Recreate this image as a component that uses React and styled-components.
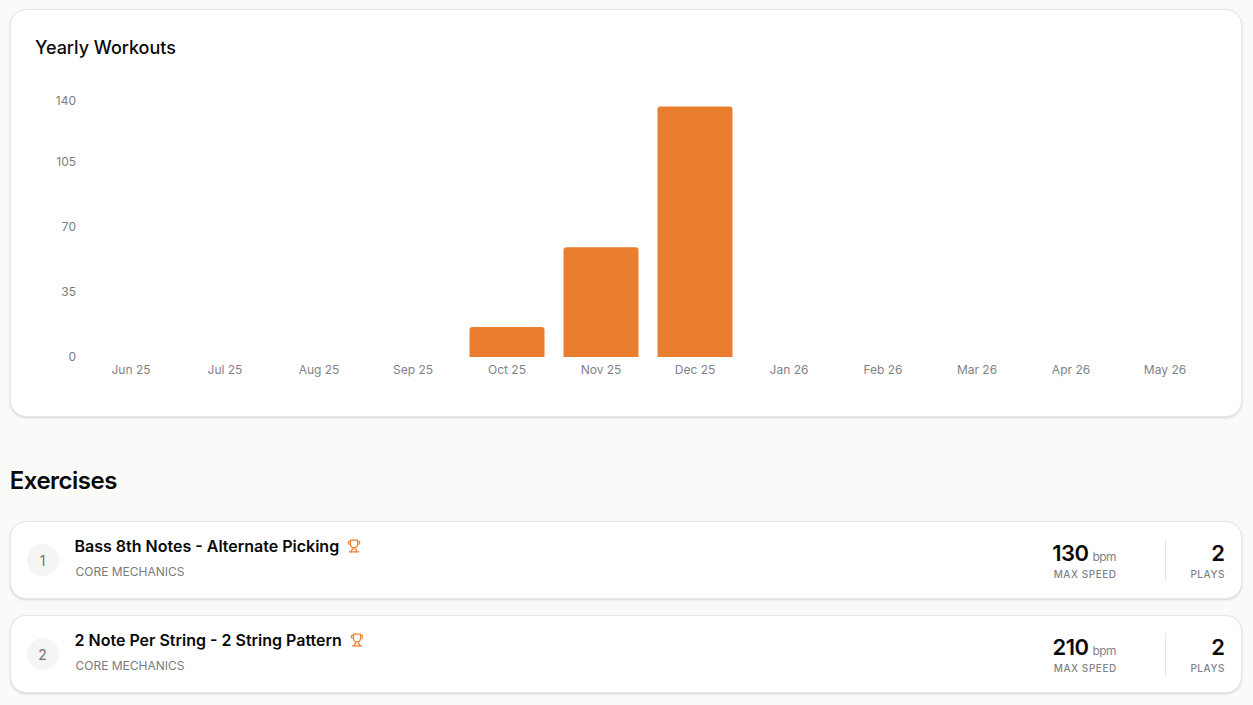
import React from "react";
import styled, { createGlobalStyle } from "styled-components";

const Global = createGlobalStyle`
  html, body { margin: 0; padding: 0; background: #fafaf8; }
  body { font-family: Inter, "Liberation Sans", sans-serif; color: #0a0a0a; overflow: hidden; }
`;

const Page = styled.div`
  height: 705px;
  overflow: hidden;
  padding: 9px 11px 0 10px;
  box-sizing: border-box;
`;

const Card = styled.section`
  background: #fff;
  border: 1px solid #e7e7e4;
  border-radius: 16px;
  box-shadow: 0 1px 3px rgba(0, 0, 0, 0.1), 0 1px 2px rgba(0, 0, 0, 0.06);
  box-sizing: border-box;
`;

const ChartCard = styled(Card)`
  height: 408px;
  padding: 26px 24px 0;
`;

const CardTitle = styled.h2`
  margin: 0;
  font-size: 18px;
  line-height: 24px;
  font-weight: 500;
  letter-spacing: -0.03px;
`;

const ChartSvg = styled.svg`
  display: block;
  margin: 32px 0 0 -24px;
`;

const AxisText = styled.text`
  font-family: Inter, "Liberation Sans", sans-serif;
  font-size: 12px;
  fill: #7d7d7a;
`;

const MonthText = styled(AxisText)`
  fill: #7f8289;
`;

const SectionTitle = styled.h2`
  margin: 48px 0 24px;
  font-size: 24px;
  line-height: 32px;
  font-weight: 600;
  letter-spacing: -0.5px;
  text-indent: -0.3px;
`;

const List = styled.div`
  display: flex;
  flex-direction: column;
  gap: 16px;
`;

const Row = styled(Card)`
  height: 78px;
  padding: 0 16px;
  display: flex;
  align-items: center;
`;

const Index = styled.div`
  width: 32px;
  height: 32px;
  padding-right: 1px;
  box-sizing: border-box;
  border-radius: 50%;
  background: #f5f5f3;
  color: #737373;
  font-size: 14px;
  display: flex;
  align-items: center;
  justify-content: center;
  flex: none;
`;

const Info = styled.div`
  margin-left: 15.5px;
  flex: 1;
  margin-top: -6px;
`;

const NameLine = styled.div`
  display: flex;
  align-items: center;
  gap: 8px;
  font-size: 16px;
  line-height: 24px;
  font-weight: 600;
`;

const Name = styled.span`
  color: #0a0a0a;
`;

const TrophyIcon = styled.svg`
  width: 14px;
  height: 14px;
  flex: none;
  fill: none;
  stroke: #e97e2e;
  stroke-width: 2;
  stroke-linecap: round;
  stroke-linejoin: round;
`;

const Category = styled.div`
  margin: 6px 0 0 1px;
  font-size: 12px;
  line-height: 16px;
  color: #7a7a7a;
`;

const Stat = styled.div`
  display: flex;
  flex-direction: column;
  align-items: ${(p) => (p.$end ? "flex-end" : "center")};
`;

const Speed = styled(Stat)`
  padding-right: 47px;
  border-right: 1px solid #e7e7e4;
  height: 43px;
  justify-content: flex-start;
`;

const Plays = styled(Stat)`
  width: 59px;
  height: 43px;
`;

const Value = styled.div`
  font-size: 22px;
  line-height: 28px;
  font-weight: 600;
  letter-spacing: -0.55px;
  white-space: nowrap;
  color: #0a0a0a;
`;

const PlaysValue = styled(Value)`
  padding-right: 0.5px;
`;

const Unit = styled.span`
  font-size: 12px;
  line-height: 1;
  font-weight: 400;
  color: #7f8289;
  margin: 0 2px 0 4px;
`;

const Label = styled.div`
  font-size: 10px;
  line-height: 14px;
  font-weight: 500;
  letter-spacing: 0.55px;
  color: #7f8289;
  white-space: nowrap;
`;

const months = ["Jun 25","Jul 25","Aug 25","Sep 25","Oct 25","Nov 25","Dec 25","Jan 26","Feb 26","Mar 26","Apr 26","May 26"];
const values = [0,0,0,0,16.4,60,137,0,0,0,0,0];
const ticks = [[140,105],[105,166],[70,231],[35,296],[0,361]];
const TOP = 92;
const BASE = 357 - TOP;

function bar(cx, h) {
  const x = cx - 37.5, w = 75, y = BASE - h, r = 3;
  return `M${x} ${BASE}V${y + r}Q${x} ${y} ${x + r} ${y}H${x + w - r}Q${x + w} ${y} ${x + w} ${y + r}V${BASE}Z`;
}

const rows = [
  { n: 1, name: "Bass 8th Notes - Alternate Picking", speed: 130, plays: 2 },
  { n: 2, name: "2 Note Per String - 2 String Pattern", speed: 210, plays: 2 },
];

export default function App() {
  return (
    <Page>
      <Global />
      <ChartCard>
        <CardTitle>Yearly Workouts</CardTitle>
        <ChartSvg width="1230" height="300" viewBox="11 92 1230 300">
          <g transform={`translate(0 ${TOP})`}>
            {ticks.map(([v, y]) => (
              <AxisText key={v} x="76" y={y - TOP} textAnchor="end">{v}</AxisText>
            ))}
            {months.map((m, i) => {
              const cx = 131 + i * 94;
              return (
                <g key={m}>
                  {values[i] > 0 && <path d={bar(cx, values[i] * 256 / 140)} fill="#e97e2e" />}
                  <MonthText x={cx} y={374 - TOP} textAnchor="middle">{m}</MonthText>
                </g>
              );
            })}
          </g>
        </ChartSvg>
      </ChartCard>
      <SectionTitle>Exercises</SectionTitle>
      <List>
        {rows.map((r) => (
          <Row key={r.n}>
            <Index>{r.n}</Index>
            <Info>
              <NameLine>
                <Name>{r.name}</Name>
                <TrophyIcon viewBox="0 0 24 24">
                  <path d="M6 9H4.5a2.5 2.5 0 0 1 0-5H6" />
                  <path d="M18 9h1.5a2.5 2.5 0 0 0 0-5H18" />
                  <path d="M4 22h16" />
                  <path d="M10 14.66V17c0 .55-.47.98-.97 1.21C7.85 18.75 7 20.24 7 22" />
                  <path d="M14 14.66V17c0 .55.47.98.97 1.21C16.15 18.75 17 20.24 17 22" />
                  <path d="M18 2H6v7a6 6 0 0 0 12 0V2Z" />
                </TrophyIcon>
              </NameLine>
              <Category>CORE MECHANICS</Category>
            </Info>
            <Speed>
              <Value>{r.speed}<Unit>bpm</Unit></Value>
              <Label>MAX SPEED</Label>
            </Speed>
            <Plays $end>
              <PlaysValue>{r.plays}</PlaysValue>
              <Label>PLAYS</Label>
            </Plays>
          </Row>
        ))}
      </List>
    </Page>
  );
}
